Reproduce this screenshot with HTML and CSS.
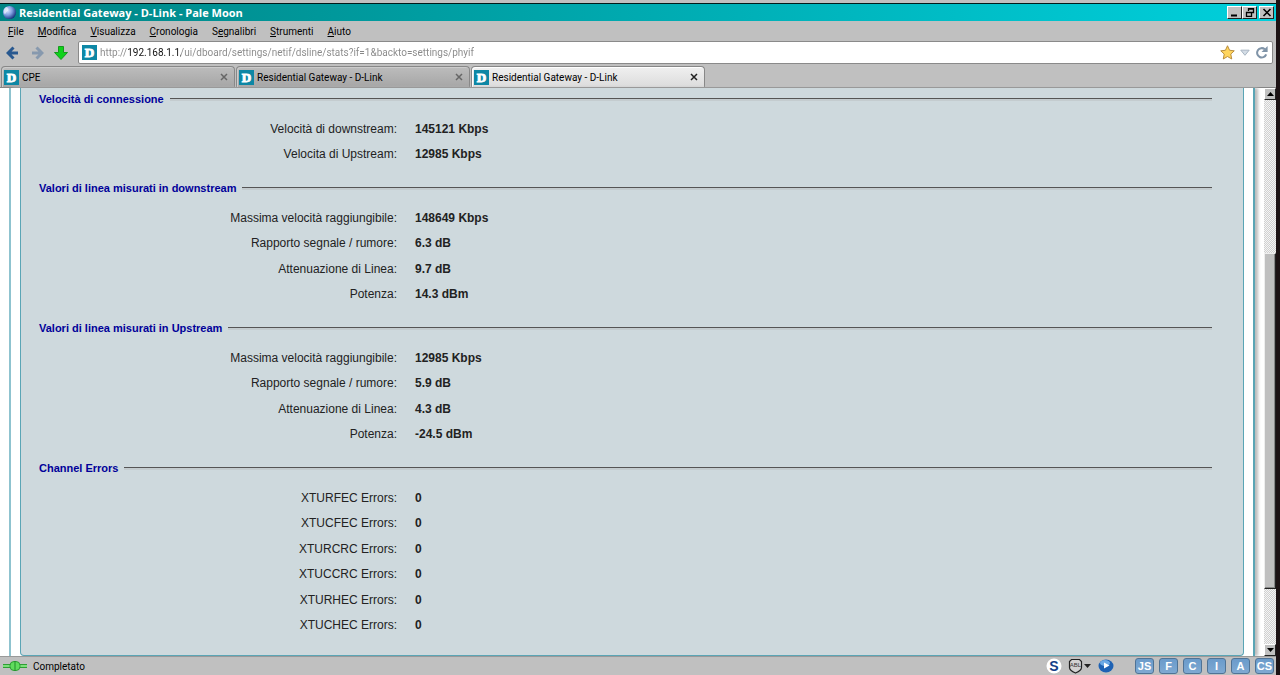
FILE: index.html
```html
<!DOCTYPE html>
<html lang="it">
<head>
    <meta charset="UTF-8">
    <meta name="viewport" content="width=device-width, initial-scale=1.0">
    <title>Residential Gateway - D-Link</title>
    <link rel="stylesheet" href="styles.css">
</head>
<body>
    <div class="window">
        <header class="titlebar">
            <svg class="moon" viewBox="0 0 16 16" aria-hidden="true">
                <defs>
                    <radialGradient id="moonfill" cx="0.35" cy="0.35" r="0.7">
                        <stop offset="0" stop-color="#dce8ff"/>
                        <stop offset="0.5" stop-color="#7f9fe0"/>
                        <stop offset="1" stop-color="#16307c"/>
                    </radialGradient>
                </defs>
                <circle cx="8" cy="8" r="7" fill="url(#moonfill)"/>
                <path d="M5 2q3 2 1 4t-3 4q-2-2-1-5t3-3z" fill="#eef4ff" opacity="0.7"/>
            </svg>
            <h1>Residential Gateway - D-Link - Pale Moon</h1>
            <div class="controls">
                <button aria-label="Riduci a icona"><svg viewBox="0 0 10 9"><path d="M1 7.5h6" stroke="#000" stroke-width="2"/></svg></button>
                <button aria-label="Ripristina"><svg viewBox="0 0 10 9"><path d="M3.5 3V.5h5v4H7M3 1h6M1.500 4.500h5v4h-5zM1 4.500h6" fill="none" stroke="#000" stroke-width="1.300"/></svg></button>
                <button class="close-window" aria-label="Chiudi"><svg viewBox="0 0 10 9"><path d="M1.500 1l7 7M8.500 1l-7 7" stroke="#000" stroke-width="1.600"/></svg></button>
            </div>
        </header>

        <nav class="menu">
            <button><u>F</u>ile</button>
            <button><u>M</u>odifica</button>
            <button><u>V</u>isualizza</button>
            <button><u>C</u>ronologia</button>
            <button>S<u>e</u>gnalibri</button>
            <button><u>S</u>trumenti</button>
            <button><u>A</u>iuto</button>
        </nav>

        <div class="toolbar">
            <button aria-label="Indietro"><svg viewBox="0 0 14 14"><path d="M7.500 1.500L2 7l5.500 5.500M2.500 7H12" fill="none" stroke="#28588f" stroke-width="3"/></svg></button>
            <button aria-label="Avanti"><svg viewBox="0 0 14 14"><path d="M6.500 1.500L12 7l-5.500 5.500M11.500 7H2" fill="none" stroke="#8799ae" stroke-width="3"/></svg></button>
            <button aria-label="Download"><svg viewBox="0 0 14 14"><path d="M4.500.5h5v6h4L7 13.500.5 6.500h4z" fill="#0fd21c" stroke="#159a1d"/></svg></button>
            <div class="address">
                <svg class="favicon" viewBox="0 0 16 16" aria-hidden="true"><rect width="16" height="16" fill="#0d87a5"/><text x="8" y="13">D</text></svg>
                <input class="url" type="text" aria-label="Indirizzo" value="http://192.168.1.1/ui/dboard/settings/netif/dsline/stats?if=1&amp;backto=settings/phyif">
                <button aria-label="Segnalibro"><svg viewBox="0 0 16 16"><path d="M8 .8l2.200 4.800 5 .6-3.700 3.500 1 5.200L8 12.300l-4.500 2.600 1-5.200L.8 6.200l5-.6z" fill="#ffd55e" stroke="#b58735"/></svg></button>
                <button aria-label="Mostra cronologia"><svg viewBox="0 0 16 16"><path d="M4 5.500h9L8.500 11z" fill="#d4dde6" stroke="#a3b1bf"/></svg></button>
                <button aria-label="Ricarica"><svg viewBox="0 0 16 16"><path d="M11.500 4.500A5 5 0 1 0 13 10" fill="none" stroke="#8094a8" stroke-width="2.200"/><path d="M14.500 1v6.500H8z" fill="#8094a8"/></svg></button>
            </div>
        </div>

        <div class="tabs">
            <div class="tab">
                <svg class="favicon" viewBox="0 0 16 16" aria-hidden="true"><rect width="16" height="16" fill="#0d87a5"/><text x="8" y="13">D</text></svg>
                <button class="label">CPE</button>
                <button class="close" aria-label="Chiudi scheda"><svg viewBox="0 0 8 8"><path d="M1 1l6 6M7 1L1 7"/></svg></button>
            </div>
            <div class="tab">
                <svg class="favicon" viewBox="0 0 16 16" aria-hidden="true"><rect width="16" height="16" fill="#0d87a5"/><text x="8" y="13">D</text></svg>
                <button class="label">Residential Gateway - D-Link</button>
                <button class="close" aria-label="Chiudi scheda"><svg viewBox="0 0 8 8"><path d="M1 1l6 6M7 1L1 7"/></svg></button>
            </div>
            <div class="tab active">
                <svg class="favicon" viewBox="0 0 16 16" aria-hidden="true"><rect width="16" height="16" fill="#0d87a5"/><text x="8" y="13">D</text></svg>
                <button class="label">Residential Gateway - D-Link</button>
                <button class="close" aria-label="Chiudi scheda"><svg viewBox="0 0 8 8"><path d="M1 1l6 6M7 1L1 7"/></svg></button>
            </div>
        </div>

        <div class="viewport">
            <div class="page">
                <main class="panel">
                    <section>
                        <h2>Velocità di connessione</h2>
                        <table>
                            <tr><th scope="row">Velocità di downstream:</th><td>145121 Kbps</td></tr>
                            <tr><th scope="row">Velocita di Upstream:</th><td>12985 Kbps</td></tr>
                        </table>
                    </section>

                    <section>
                        <h2>Valori di linea misurati in downstream</h2>
                        <table>
                            <tr><th scope="row">Massima velocità raggiungibile:</th><td>148649 Kbps</td></tr>
                            <tr><th scope="row">Rapporto segnale / rumore:</th><td>6.3 dB</td></tr>
                            <tr><th scope="row">Attenuazione di Linea:</th><td>9.7 dB</td></tr>
                            <tr><th scope="row">Potenza:</th><td>14.3 dBm</td></tr>
                        </table>
                    </section>

                    <section>
                        <h2>Valori di linea misurati in Upstream</h2>
                        <table>
                            <tr><th scope="row">Massima velocità raggiungibile:</th><td>12985 Kbps</td></tr>
                            <tr><th scope="row">Rapporto segnale / rumore:</th><td>5.9 dB</td></tr>
                            <tr><th scope="row">Attenuazione di Linea:</th><td>4.3 dB</td></tr>
                            <tr><th scope="row">Potenza:</th><td>-24.5 dBm</td></tr>
                        </table>
                    </section>

                    <section>
                        <h2>Channel Errors</h2>
                        <table>
                            <tr><th scope="row">XTURFEC Errors:</th><td>0</td></tr>
                            <tr><th scope="row">XTUCFEC Errors:</th><td>0</td></tr>
                            <tr><th scope="row">XTURCRC Errors:</th><td>0</td></tr>
                            <tr><th scope="row">XTUCCRC Errors:</th><td>0</td></tr>
                            <tr><th scope="row">XTURHEC Errors:</th><td>0</td></tr>
                            <tr><th scope="row">XTUCHEC Errors:</th><td>0</td></tr>
                        </table>
                    </section>
                </main>
            </div>
            <div class="scrollbar">
                <button aria-label="Scorri su"><svg viewBox="0 0 7 4"><path d="M0 4h7L3.500 0z"/></svg></button>
                <div class="track-above"></div>
                <div class="thumb"></div>
                <div class="track-below"></div>
                <button aria-label="Scorri giù"><svg viewBox="0 0 7 4"><path d="M0 0h7L3.500 4z"/></svg></button>
            </div>
        </div>

        <footer class="statusbar">
            <svg class="plug" viewBox="0 0 24 12" aria-hidden="true">
                <path d="M0 6h24" stroke="#2f9e35" stroke-width="4"/>
                <path d="M0 6h24" stroke="#7be07a" stroke-width="2"/>
                <rect x="7" y="1.500" width="10" height="9" rx="4" fill="#5fdc5c" stroke="#2f9e35"/>
                <path d="M12 1v10" stroke="#238a2b"/>
            </svg>
            <span class="status">Completato</span>
            <button class="addon" aria-label="Stylish"><svg viewBox="0 0 16 16"><circle cx="8" cy="8" r="7.500" fill="#fff"/><text class="s-letter" x="8" y="13">S</text></svg></button>
            <button class="addon shield" aria-label="Adblock">
                <svg viewBox="0 0 24 16"><path d="M3.500 1.500h8l2 2v6q0 3-6 5.500-6-2.500-6-5.500v-6z" fill="#d2d2d2" stroke="#222" stroke-width="1.200"/><text class="abl" x="7.500" y="9">ABL</text><path d="M16 6h7l-3.500 4z" fill="#222"/></svg>
            </button>
            <button class="addon" aria-label="Riproduci"><svg viewBox="0 0 16 16"><ellipse cx="8" cy="8" rx="7.500" ry="6.500" fill="#1e62b4"/><ellipse cx="7" cy="5" rx="5" ry="3" fill="#6ca9e5"/><path d="M6 4.500v6L11.500 7.500z" fill="#fff"/></svg></button>
            <div class="toggles">
                <button>JS</button>
                <button>F</button>
                <button>C</button>
                <button>I</button>
                <button>A</button>
                <button>CS</button>
            </div>
        </footer>
    </div>
</body>
</html>
```
FILE: styles.css
```css
* {
    box-sizing: border-box;
}
body {
    margin: 0;
    background-color: #1c1214;
    font-family: "Liberation Sans", Arial, sans-serif;
    font-size: 12px;
    color: #222;
}
button {
    margin: 0;
    padding: 0;
    border: 0;
    background: none;
    font: inherit;
    color: inherit;
}
svg {
    display: block;
}

/* Window */
.window {
    display: flex;
    flex-direction: column;
    height: 100vh;
    margin-right: 4px;
    border-top: 3px solid #c0c0c0;
    background-color: #c0c0c0;
}
.titlebar {
    display: flex;
    align-items: center;
    height: 18px;
    padding: 0 2px;
    border-top: 1px solid #001a1a;
    background: linear-gradient(to right, #008484, #00d0dc);
    color: #fff;
}
.moon {
    width: 15px;
    height: 15px;
}
.titlebar h1 {
    flex: 1;
    margin: 0 2px;
    font-family: "Open Sans", sans-serif;
    font-size: 11px;
    line-height: 16px;
}
.controls {
    display: flex;
}
.controls button,
.scrollbar button {
    display: flex;
    align-items: center;
    justify-content: center;
    border: 1px solid;
    border-color: #fff #222 #222 #fff;
    background-color: #c0c0c0;
}
.controls button {
    width: 15px;
    height: 13px;
}
.controls svg {
    width: 10px;
    height: 9px;
}
.controls .close-window {
    margin-left: 2px;
}

/* Menu and toolbar */
.menu,
.url,
.tab,
.statusbar {
    font-family: Roboto, sans-serif;
    font-size: 10px;
    color: #000;
}
.menu {
    display: flex;
    gap: 14px;
    height: 20px;
    padding: 0 8px;
}
.toolbar {
    display: flex;
    align-items: center;
    gap: 10px;
    height: 23px;
    padding: 0 3px 0 6px;
}
.toolbar svg {
    width: 14px;
    height: 14px;
}
.address {
    display: flex;
    flex: 1;
    align-items: center;
    gap: 2px;
    height: 23px;
    padding: 0 3px;
    border: 1px solid #8a8a8a;
    border-radius: 2px;
    background-color: #fff;
}
.address .favicon,
.address button svg {
    width: 15px;
    height: 15px;
}
.favicon text {
    font: bold 14px "Liberation Serif", serif;
    text-anchor: middle;
    fill: #fff;
    stroke: #fff;
}
/* the host part of the address is darker than the rest */
.url {
    flex: 1;
    min-width: 0;
    padding: 0 1px;
    border: 0;
    background: linear-gradient(to right, #888 28px, #111 28px, #111 82px, #888 82px);
    background-clip: text;
    color: transparent;
}

/* Tabs */
.tabs {
    display: flex;
    gap: 1px;
    height: 24px;
    padding: 2px 1px 0;
    border-bottom: 1px solid #858585;
}
.tab {
    display: flex;
    align-items: center;
    width: 234px;
    padding: 0 6px 0 2px;
    border: 1px solid #888;
    border-bottom: 0;
    border-radius: 4px 4px 0 0;
    background: linear-gradient(#bcbcbc, #a6a6a6);
    box-shadow: inset 1px 1px 0 #ccc;
}
.tab.active {
    background: linear-gradient(#f0f0f0, #dcdcdc);
    box-shadow: inset 1px 1px 0 #fff;
}
.tab .favicon {
    width: 15px;
    height: 15px;
}
.tab .label {
    flex: 1;
    padding-left: 3px;
    text-align: left;
}
.tab .close svg {
    width: 8px;
    height: 8px;
    stroke: #666;
    stroke-width: 1.5;
}
.tab.active .close svg {
    stroke: #222;
}

/* Page */
.viewport {
    display: flex;
    flex: 1;
    min-height: 0;
    background-color: #fff;
}
.page {
    flex: 1;
    margin: 0 9px;
    padding: 0 9px;
    border: solid #5aa5b5;
    border-width: 0 2px;
    border-left-color: #8fc3cf;
    box-shadow: 3px 0 3px #bbb;
}
.panel {
    height: 100%;
    padding: 1px 31px 0 18px;
    overflow: hidden;
    border: 1px solid #5aa5b5;
    border-top: 0;
    border-radius: 0 0 4px 4px;
    background-color: #ced9dd;
}
.panel h2 {
    display: flex;
    align-items: center;
    gap: 6px;
    margin: 0;
    font-size: 11px;
    line-height: 20px;
    color: #000099;
}
.panel h2::after {
    content: "";
    flex: 1;
    height: 2px;
    border-top: 1px solid #555;
    background-color: #c4cccf;
}
.panel table {
    width: 100%;
    margin: 10px 0 8px;
    border-collapse: collapse;
    line-height: 20px;
}
.panel tr {
    height: 25px;
    vertical-align: top;
}
.panel tr:nth-child(even) {
    height: 26px;
}
.panel th {
    width: 358px;
    padding: 0;
    font-weight: normal;
    text-align: right;
}
.panel td {
    padding: 0 0 0 18px;
    font-weight: bold;
}

/* Scrollbar */
.scrollbar {
    display: flex;
    flex-direction: column;
    width: 12px;
    background: repeating-conic-gradient(#d0d0d0 0 25%, #f4f4f4 0 50%) 0 0 / 2px 2px;
}
.scrollbar button {
    height: 12px;
}
.scrollbar svg {
    width: 7px;
    height: 4px;
}
.track-above {
    flex: 154;
}
.thumb {
    flex: 335;
    border: 1px solid;
    border-color: #eee #222 #222 #eee;
    background-color: #c0c0c0;
    box-shadow: inset -1px -1px 0 #888;
}
.track-below {
    flex: 55;
}

/* Status bar */
.statusbar {
    display: flex;
    align-items: center;
    height: 19px;
    padding: 0 2px 0 3px;
    border-top: 1px solid #999;
}
.plug {
    width: 24px;
    height: 12px;
}
.status {
    flex: 1;
    padding-left: 6px;
}
.addon {
    margin-right: 6px;
}
.addon svg {
    width: 16px;
    height: 16px;
}
.shield svg {
    width: 24px;
}
.s-letter {
    font: bold 14px "Liberation Sans", sans-serif;
    text-anchor: middle;
    fill: #123f88;
}
.abl {
    font: 6px "Liberation Sans", sans-serif;
    text-anchor: middle;
    fill: #333;
}
.toggles {
    display: flex;
    gap: 5px;
    margin-left: 15px;
}
.toggles button {
    width: 19px;
    height: 16px;
    border: 1px solid #4f7396;
    border-radius: 3px;
    background: linear-gradient(#6a9bcb, #7fa9d2);
    font-family: "Liberation Sans", sans-serif;
    font-size: 11px;
    font-weight: bold;
    line-height: 14px;
    color: #fff;
}
```
